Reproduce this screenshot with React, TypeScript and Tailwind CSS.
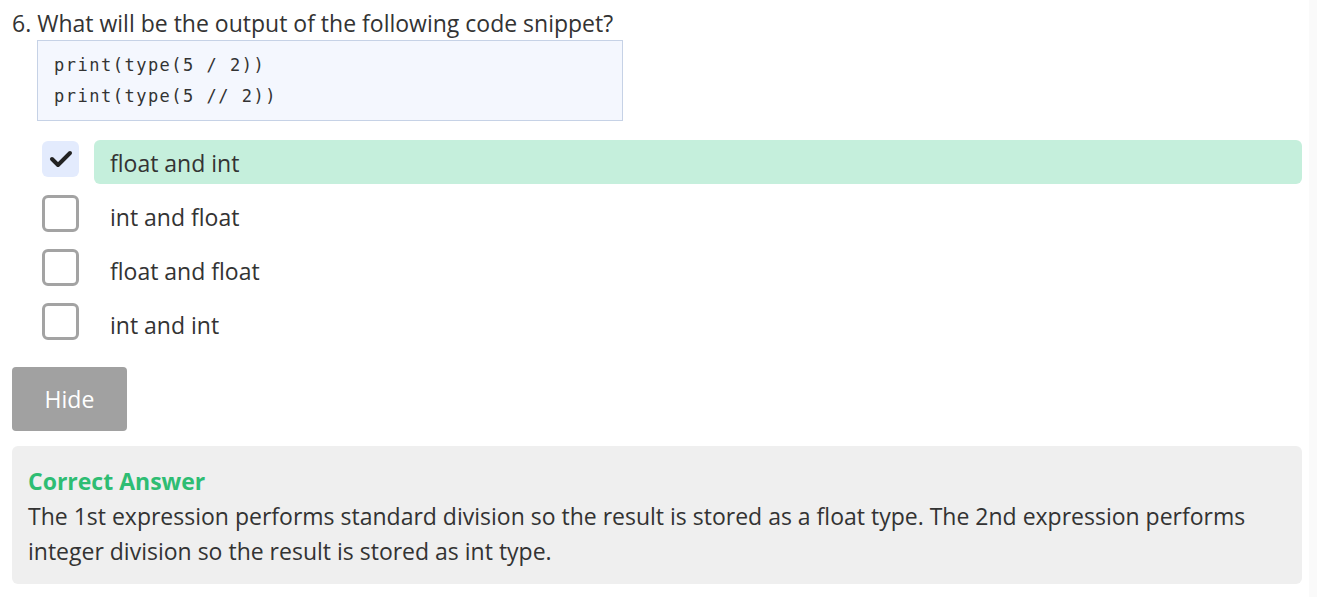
const options = [
  { label: "float and int", checked: true },
  { label: "int and float", checked: false },
  { label: "float and float", checked: false },
  { label: "int and int", checked: false },
];

function CheckBox({ checked }: { checked: boolean }) {
  if (checked) {
    return (
      <div className="w-[37px] h-[36px] shrink-0 rounded-[6px] bg-[#e3ebfd] flex items-center justify-center">
        <svg width="24" height="20" viewBox="0 0 24 20">
          <polyline points="3,10 9,16 21,4" fill="none" stroke="#222" strokeWidth="4" strokeLinecap="round" strokeLinejoin="round" />
        </svg>
      </div>
    );
  }
  return <div className="w-[37px] h-[37px] shrink-0 rounded-[6px] border-[3px] border-[#a3a3a3] bg-white" />;
}

export default function App() {
  return (
    <div className="w-[1317px] h-[597px] flex bg-white text-[#333] font-['Open_Sans',sans-serif]">
      <div className="flex-1 pl-[12px] pr-[7px]">
        <h2 className="text-[23px] leading-[30px] pt-[8px]">6. What will be the output of the following code snippet?</h2>
        <div className="ml-[25px] mt-[2px] w-[586px] h-[81px] bg-[#f4f7fe] border border-[#c6d2e6] pl-[16px] pt-[9px] font-['DejaVu_Sans_Mono',monospace] text-[17px] tracking-[1.5px] leading-[31px] text-[#333]">
          <div>print(type(5 / 2))</div>
          <div>print(type(5 // 2))</div>
        </div>
        <div className="mt-[19px] flex flex-col gap-[10px]">
          {options.map((o) => (
            <div key={o.label} className="flex items-start h-[44px]">
              <div className="w-[82px] flex justify-end pr-[15px] pt-[1px]">
                <CheckBox checked={o.checked} />
              </div>
              <div className={`flex-1 h-[44px] rounded-[6px] pl-[16px] pt-[3px] flex items-center text-[23px] ${o.checked ? "bg-[#c5efdc]" : ""}`}>
                {o.label}
              </div>
            </div>
          ))}
        </div>
        <button className="mt-[21px] w-[115px] h-[64px] rounded-[4px] bg-[#a1a1a1] text-white text-[23px]">Hide</button>
        <div className="mt-[15px] h-[138px] rounded-[6px] bg-[#efefef] pl-[16px] pr-[16px] pt-[20px]">
          <div className="text-[23px] leading-[30px] font-bold text-[#2ebd73]">Correct Answer</div>
          <p className="text-[23px] leading-[35px] mt-[3px]">
            The 1st expression performs standard division so the result is stored as a float type. The 2nd expression performs integer division so the result is stored as int type.
          </p>
        </div>
      </div>
      <div className="w-[8px] bg-[#fafafa]" />
    </div>
  );
}
